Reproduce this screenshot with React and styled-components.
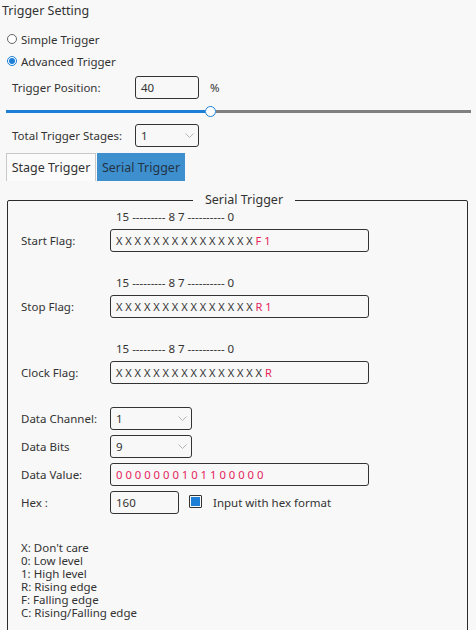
import React from 'react';
import styled, { createGlobalStyle } from 'styled-components';

const Global = createGlobalStyle`
  html, body { margin: 0; padding: 0; background: #f8f8f8; }
  body { font-family: "Noto Sans", "Open Sans", sans-serif; color: #333; font-size: 11.5px; }
  * { box-sizing: border-box; }
`;

const Page = styled.div`
  width: 476px;
  height: 630px;
  overflow: hidden;
  display: flex;
  flex-direction: column;
  & > * { flex-shrink: 0; }
`;

const Title = styled.div`
  height: 22px;
  line-height: 22px;
  padding-left: 2px;
  font-size: 12.5px;
`;

const RadioRow = styled.label`
  height: 22px;
  display: flex;
  align-items: center;
  gap: 4px;
  padding-left: 7px;
  margin-top: ${p => p.$mt || 0}px;
`;

const RadioDot = styled.span`
  width: 10px;
  height: 10px;
  border-radius: 50%;
  border: 1px solid ${p => (p.$on ? '#1d7fd6' : '#666')};
  background: #fff;
  display: flex;
  align-items: center;
  justify-content: center;
  &::after {
    content: '';
    width: 6px;
    height: 6px;
    border-radius: 50%;
    background: ${p => (p.$on ? '#1d7fd6' : 'transparent')};
  }
`;

const FieldRow = styled.div`
  display: flex;
  align-items: center;
  height: 23px;
  padding-left: 12px;
  margin-top: ${p => p.$mt || 0}px;
`;

const FieldLabel = styled.span`
  width: 123px;
`;

const Box = styled.div`
  width: ${p => p.$w}px;
  height: 23px;
  flex: none;
  border: 1px solid #333;
  border-radius: 3px;
  display: flex;
  align-items: center;
  justify-content: space-between;
  padding: 0 4px 0 5px;
  color: #333;
`;

const Unit = styled.span`
  margin-left: 11px;
`;

const Slider = styled.div`
  height: 24px;
  display: flex;
  align-items: center;
  padding: 0 5px 0 6px;
`;

const TrackFill = styled.div`
  height: 3px;
  background: #1d7fd6;
`;

const Handle = styled.div`
  width: 11px;
  height: 11px;
  border-radius: 50%;
  border: 1.5px solid #1d7fd6;
  background: #fff;
  flex: none;
`;

const TrackRest = styled.div`
  flex: 1;
  height: 3px;
  background: #808080;
`;

const Tabs = styled.div`
  display: flex;
  gap: 1px;
  height: 28px;
  margin-top: 6px;
  padding-left: 6px;
`;

const Tab = styled.div`
  width: ${p => p.$w}px;
  display: flex;
  align-items: center;
  justify-content: center;
  font-size: 12.5px;
  border: 1px solid ${p => (p.$active ? '#3d8fd0' : '#c8c8c8')};
  border-bottom: none;
  background: ${p => (p.$active ? '#3d8fcd' : '#fbfbfb')};
  color: ${p => (p.$active ? '#243447' : '#333')};
`;

const Group = styled.fieldset`
  margin: 11px 0 0 7px;
  width: 461px;
  border: 1px solid #2b2b2b;
  border-radius: 2px;
  padding: 3px 0 30px 13px;
  min-width: 0;
`;

const GroupTitle = styled.legend`
  margin: 0 auto;
  padding: 0 12px;
  font-size: 12.5px;
  line-height: 16px;
`;

const FlagBlock = styled.div`
  display: flex;
  flex-direction: column;
  margin-top: ${p => p.$mt || 0}px;
`;

const Bits = styled.div`
  height: 12px;
  line-height: 12px;
  font-size: 11.5px;
  margin-left: 95px;
  margin-bottom: 6px;
`;

const Row = styled.div`
  display: flex;
  align-items: center;
  height: 23px;
`;

const RowLabel = styled.span`
  width: 89px;
`;

const Fields = styled.div`
  display: flex;
  flex-direction: column;
  gap: 5px;
  margin-top: 23px;
`;

const Mask = styled.span`
  white-space: pre;
  font-size: ${p => p.$fs || 11}px;
`;

const Red = styled.span`
  color: #e5245b;
`;

const Check = styled.span`
  width: 13px;
  height: 13px;
  border: 1px solid #333;
  border-radius: 1px;
  padding: 1px;
  margin-left: 10px;
  margin-right: 11px;
  align-self: flex-start;
  margin-top: 4px;
  &::after {
    content: '';
    display: block;
    width: 100%;
    height: 100%;
    background: #1d7fd6;
  }
`;

const Notes = styled.div`
  margin-top: 27px;
  font-size: 11.5px;
  line-height: 13px;
`;

const Chevron = () => (
  <svg width="9" height="6" viewBox="0 0 9 6">
    <polyline points="0.5,0.5 4.5,4.5 8.5,0.5" fill="none" stroke="#b4b4b4" strokeWidth="1" />
  </svg>
);

const Select = ({ w, value }) => (
  <Box $w={w}>
    <span>{value}</span>
    <Chevron />
  </Box>
);

const sp = s => s.split('').join(' ');

const Flag = ({ mt, label, x, tail }) => (
  <FlagBlock $mt={mt}>
    <Bits>15 --------- 8 7 ---------- 0</Bits>
    <Row>
      <RowLabel>{label}</RowLabel>
      <Box $w={259}>
        <Mask>
          {sp(x)} <Red>{sp(tail)}</Red>
        </Mask>
      </Box>
    </Row>
  </FlagBlock>
);

export default function App() {
  return (
    <Page>
      <Global />
      <Title>Trigger Setting</Title>
      <RadioRow $mt={6}>
        <RadioDot />
        Simple Trigger
      </RadioRow>
      <RadioRow>
        <RadioDot $on />
        Advanced Trigger
      </RadioRow>
      <FieldRow $mt={4}>
        <FieldLabel>Trigger Position:</FieldLabel>
        <Box $w={64}>40</Box>
        <Unit>%</Unit>
      </FieldRow>
      <Slider>
        <TrackFill style={{ width: 199 }} />
        <Handle />
        <TrackRest />
      </Slider>
      <FieldRow $mt={1}>
        <FieldLabel>Total Trigger Stages:</FieldLabel>
        <Select w={64} value="1" />
      </FieldRow>
      <Tabs>
        <Tab $w={90}>Stage Trigger</Tab>
        <Tab $w={88} $active>Serial Trigger</Tab>
      </Tabs>
      <Group>
        <GroupTitle>Serial Trigger</GroupTitle>
        <Flag label="Start Flag:" x="XXXXXXXXXXXXXXX" tail="F1" />
        <Flag mt={25} label="Stop Flag:" x="XXXXXXXXXXXXXXX" tail="R1" />
        <Flag mt={25} label="Clock Flag:" x="XXXXXXXXXXXXXXXX" tail="R" />
        <Fields>
          <Row>
            <RowLabel>Data Channel:</RowLabel>
            <Select w={82} value="1" />
          </Row>
          <Row>
            <RowLabel>Data Bits</RowLabel>
            <Select w={82} value="9" />
          </Row>
          <Row>
            <RowLabel>Data Value:</RowLabel>
            <Box $w={259}>
              <Mask $fs={11.3}>
                <Red>{sp('0000000101100000')}</Red>
              </Mask>
            </Box>
          </Row>
          <Row>
            <RowLabel>Hex :</RowLabel>
            <Box $w={69}>160</Box>
            <Check />
            <span>Input with hex format</span>
          </Row>
        </Fields>
        <Notes>
          <div>X: Don't care</div>
          <div>0: Low level</div>
          <div>1: High level</div>
          <div>R: Rising edge</div>
          <div>F: Falling edge</div>
          <div>C: Rising/Falling edge</div>
        </Notes>
      </Group>
    </Page>
  );
}
